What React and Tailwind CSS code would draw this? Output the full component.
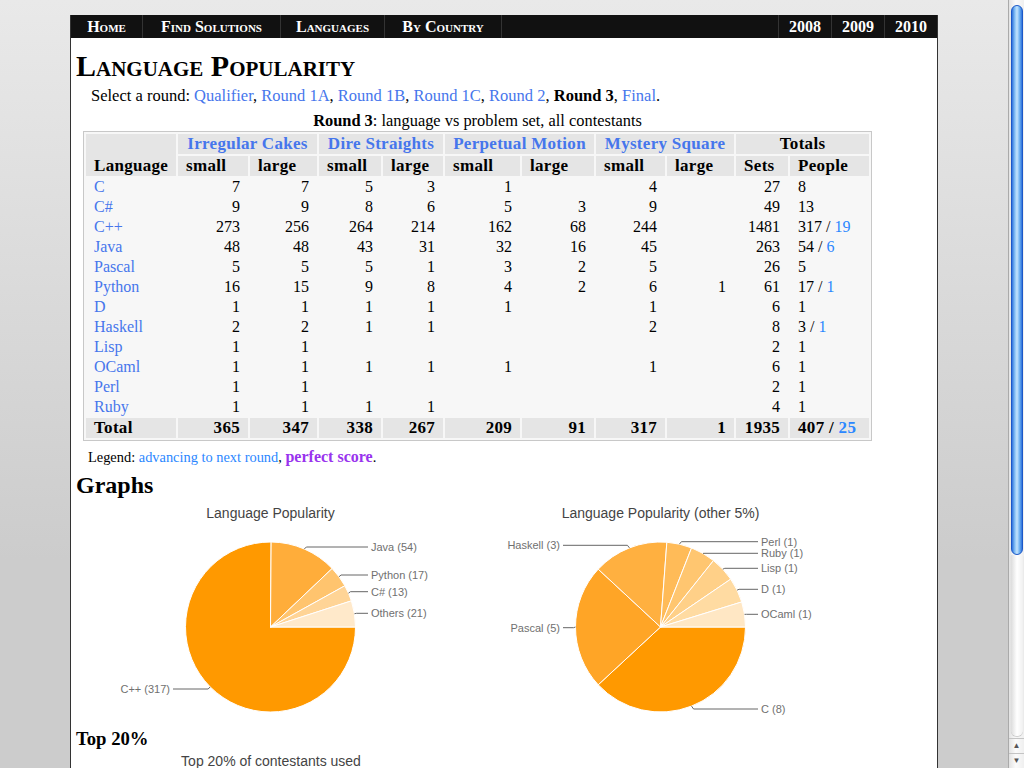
import React from "react";

const LINK = "text-[#4676ec]";
const ADV = "text-[#2b87ff]";

const LEFT_NAV = [
  { label: "Home", w: "w-[72px]" },
  { label: "Find Solutions", w: "w-[138px]" },
  { label: "Languages", w: "w-[104px]" },
  { label: "By Country", w: "w-[117px]" },
];
const YEARS = ["2008", "2009", "2010"];

const ROUNDS = ["Qualifier", "Round 1A", "Round 1B", "Round 1C", "Round 2"];

const PROBLEMS = ["Irregular Cakes", "Dire Straights", "Perpetual Motion", "Mystery Square"];

const COLS = [
  "w-[90px]", "w-[70px]", "w-[67px]", "w-[62px]", "w-[60px]",
  "w-[75px]", "w-[72px]", "w-[69px]", "w-[67px]", "w-[52px]", "w-[79px]",
];

// name, 8 problem cells, sets, people [count, advancing]
const ROWS = [
  ["C", [7, 7, 5, 3, 1, "", 4, ""], 27, [8]],
  ["C#", [9, 9, 8, 6, 5, 3, 9, ""], 49, [13]],
  ["C++", [273, 256, 264, 214, 162, 68, 244, ""], 1481, [317, 19]],
  ["Java", [48, 48, 43, 31, 32, 16, 45, ""], 263, [54, 6]],
  ["Pascal", [5, 5, 5, 1, 3, 2, 5, ""], 26, [5]],
  ["Python", [16, 15, 9, 8, 4, 2, 6, 1], 61, [17, 1]],
  ["D", [1, 1, 1, 1, 1, "", 1, ""], 6, [1]],
  ["Haskell", [2, 2, 1, 1, "", "", 2, ""], 8, [3, 1]],
  ["Lisp", [1, 1, "", "", "", "", "", ""], 2, [1]],
  ["OCaml", [1, 1, 1, 1, 1, "", 1, ""], 6, [1]],
  ["Perl", [1, 1, "", "", "", "", "", ""], 2, [1]],
  ["Ruby", [1, 1, 1, 1, "", "", "", ""], 4, [1]],
];
const TOTAL = [365, 347, 338, 267, 209, 91, 317, 1];

const LEFT_PIE = [
  { v: 317, c: "#ff9900", label: "C++ (317)", lx: 94, ly: 189, side: "left" },
  { v: 54, c: "#ffad3a", label: "Java (54)", lx: 295, ly: 47, side: "right" },
  { v: 17, c: "#ffc46e", label: "Python (17)", lx: 295, ly: 75, side: "right" },
  { v: 13, c: "#ffd496", label: "C# (13)", lx: 295, ly: 91.7, side: "right" },
  { v: 21, c: "#ffe9ca", label: "Others (21)", lx: 295, ly: 113.3, side: "right" },
];

const RIGHT_PIE = [
  { v: 8, c: "#ff9900", label: "C (8)", lx: 295, ly: 209, side: "right" },
  { v: 5, c: "#ffa526", label: "Pascal (5)", lx: 94, ly: 127.7, side: "left" },
  { v: 3, c: "#ffb040", label: "Haskell (3)", lx: 94, ly: 45.3, side: "left" },
  { v: 1, c: "#ffbb58", label: "Perl (1)", lx: 295, ly: 41.7, side: "right" },
  { v: 1, c: "#ffc670", label: "Ruby (1)", lx: 295, ly: 53.3, side: "right" },
  { v: 1, c: "#ffd088", label: "Lisp (1)", lx: 295, ly: 68.3, side: "right" },
  { v: 1, c: "#ffdba2", label: "D (1)", lx: 295, ly: 89.3, side: "right" },
  { v: 1, c: "#ffe7c4", label: "OCaml (1)", lx: 295, ly: 114.3, side: "right" },
];

function pt(cx, cy, r, deg) {
  const a = (deg * Math.PI) / 180;
  return [cx + r * Math.cos(a), cy + r * Math.sin(a)];
}

function PieChart({ title, slices }) {
  const cx = 194.5;
  const cy = 127;
  const r = 85;
  const total = slices.reduce((s, x) => s + x.v, 0);
  let a = 0;
  const parts = slices.map((s) => {
    const a0 = a;
    const a1 = a + (s.v / total) * 360;
    a = a1;
    return { ...s, a0, a1 };
  });

  return (
    <svg width="390" height="225" className="block shrink-0">
      <text
        x={cx}
        y="18.3"
        textAnchor="middle"
        fontFamily="'Liberation Sans', Arial, sans-serif"
        fontSize="14"
        fill="#444"
      >
        {title}
      </text>
      {parts.map((p, i) => {
        const [x0, y0] = pt(cx, cy, r, p.a0);
        const [x1, y1] = pt(cx, cy, r, p.a1);
        const large = p.a1 - p.a0 > 180 ? 1 : 0;
        return (
          <path
            key={i}
            d={`M${cx},${cy} L${x0},${y0} A${r},${r} 0 ${large} 1 ${x1},${y1} Z`}
            fill={p.c}
            stroke="#fff"
            strokeWidth="1"
          />
        );
      })}
      {parts.map((p, i) => {
        const [ex, ey] = pt(cx, cy, r, (p.a0 + p.a1) / 2);
        const right = p.side === "right";
        const endX = right ? p.lx - 3 : p.lx + 3;
        const midX = right ? ex + 2 : ex - 2;
        return (
          <g key={i}>
            <polyline
              points={`${ex},${ey} ${midX},${p.ly} ${endX},${p.ly}`}
              fill="none"
              stroke="#666"
              strokeWidth="1"
            />
            <text
              x={p.lx}
              y={p.ly + 4}
              textAnchor={right ? "start" : "end"}
              fontFamily="'Liberation Sans', Arial, sans-serif"
              fontSize="11"
              fill="#707070"
            >
              {p.label}
            </text>
          </g>
        );
      })}
    </svg>
  );
}

function People({ p }) {
  if (p.length === 1) return <>{p[0]}</>;
  return (
    <>
      {p[0]} / <span className={ADV}>{p[1]}</span>
    </>
  );
}

function Scrollbar() {
  return (
    <div className="flex h-[768px] w-[16px] shrink-0 flex-col border-l border-[#aaaaaa] bg-[linear-gradient(to_right,#e2e2e2,#fbfbfb_45%,#efefef)]">
      <div className="h-[5px]" />
      <div className="mx-auto h-[550px] w-[12px] rounded-full border border-[#1b58c8] bg-[linear-gradient(to_right,#2e73dd,#8ac4f6_30%,#c4e3fd_50%,#7ab9f3_72%,#2e73dd)]" />
      <div className="mx-auto w-[12px] flex-1 rounded-b-full bg-[linear-gradient(to_right,#dcdcdc,#ffffff_50%,#f0f0f0)] shadow-[0_1px_1px_rgba(0,0,0,0.2)]" />
      <div className="mt-[2px] flex h-[15px] items-center justify-center border-t border-[#c4c4c4] text-[8px] leading-none text-[#555]">
        ▲
      </div>
      <div className="flex h-[15px] items-center justify-center border-t border-[#c4c4c4] text-[8px] leading-none text-[#555]">
        ▼
      </div>
    </div>
  );
}

const TH = "bg-[#e5e5e5] p-0 text-[17px] font-bold tracking-[0.3px]";

export default function App() {
  return (
    <div className="flex h-[768px] overflow-hidden bg-[linear-gradient(to_bottom,#e9e9e9_0px,#cccccc_560px)] font-['Liberation_Serif',serif] text-black">
      <div className="flex flex-1 justify-center pt-[15px]">
        <div className="h-[900px] w-[868px] border-x border-[#333] bg-white">
          {/* top nav */}
          <div className="flex h-[23px] bg-[#111] text-[16px] font-bold leading-[23px] text-white [font-variant:small-caps]">
            {LEFT_NAV.map((n) => (
              <div key={n.label} className={`${n.w} border-r border-[#333] text-center`}>
                {n.label}
              </div>
            ))}
            <div className="flex-1" />
            {YEARS.map((y) => (
              <div key={y} className="w-[53px] border-l border-[#333] text-center">
                {y}
              </div>
            ))}
          </div>

          <div className="pl-[5px]">
            <h1 className="mt-[10px] h-[36px] text-[30px] font-bold leading-[36px] [font-variant:small-caps]">
              Language Popularity
            </h1>
            <p className="mt-[2px] ml-[15px] text-[16.5px] leading-[20px]">
              Select a round:{" "}
              {ROUNDS.map((r) => (
                <span key={r}>
                  <span className={LINK}>{r}</span>,{" "}
                </span>
              ))}
              <b>Round 3</b>, <span className={LINK}>Final</span>.
            </p>

            {/* table */}
            <div className="mt-[5px] ml-[7px] w-[789px]">
              <div className="text-center text-[16.4px] leading-[20px]">
                <b>Round 3</b>: language vs problem set, all contestants
              </div>
              <table className="w-[789px] table-fixed border-separate border-spacing-[2px] border border-[#c8c8c8] bg-[#f7f7f7] text-[16px]">
                <colgroup>
                  {COLS.map((c, i) => (
                    <col key={i} className={c} />
                  ))}
                </colgroup>
                <thead>
                  <tr className="h-[20px] leading-[20px]">
                    <th rowSpan={2} className={`${TH} pl-2 text-left align-bottom`}>
                      Language
                    </th>
                    {PROBLEMS.map((p) => (
                      <th key={p} colSpan={2} className={`${TH} text-center whitespace-nowrap ${LINK}`}>
                        {p}
                      </th>
                    ))}
                    <th colSpan={2} className={`${TH} text-center`}>
                      Totals
                    </th>
                  </tr>
                  <tr className="h-[20px] leading-[20px]">
                    {["small", "large", "small", "large", "small", "large", "small", "large", "Sets", "People"].map(
                      (h, i) => (
                        <th key={i} className={`${TH} pl-2 text-left`}>
                          {h}
                        </th>
                      )
                    )}
                  </tr>
                </thead>
                <tbody>
                  {ROWS.map(([name, vals, sets, people]) => (
                    <tr key={name} className="h-[18px] leading-[18px]">
                      <td className={`p-0 pl-2 ${LINK}`}>{name}</td>
                      {vals.map((v, i) => (
                        <td key={i} className="p-0 pr-2 text-right">
                          {v}
                        </td>
                      ))}
                      <td className="p-0 pr-2 text-right">{sets}</td>
                      <td className="p-0 pl-2 text-left whitespace-nowrap">
                        <People p={people} />
                      </td>
                    </tr>
                  ))}
                  <tr className="h-[20px] leading-[20px]">
                    <td className={`${TH} pl-2`}>Total</td>
                    {TOTAL.map((v, i) => (
                      <td key={i} className={`${TH} pr-2 text-right`}>
                        {v}
                      </td>
                    ))}
                    <td className={`${TH} pr-2 text-right`}>1935</td>
                    <td className={`${TH} pl-2 text-left whitespace-nowrap`}>
                      <People p={[407, 25]} />
                    </td>
                  </tr>
                </tbody>
              </table>
            </div>

            <p className="mt-[6px] ml-[12px] text-[14.4px] leading-[20px]">
              Legend: <span className={ADV}>advancing to next round</span>,{" "}
              <b className="text-[16px] text-[#9933ee]">perfect score</b>.
            </p>

            <h2 className="mt-[4px] h-[28px] text-[24px] font-bold leading-[28px]">Graphs</h2>

            <div className="mt-[1px] flex">
              <PieChart title="Language Popularity" slices={LEFT_PIE} />
              <PieChart title="Language Popularity (other 5%)" slices={RIGHT_PIE} />
            </div>

            <h3 className="mt-[3px] h-[22px] text-[18.7px] font-bold leading-[22px]">Top 20%</h3>

            <div className="mt-[1px] w-[390px] text-center font-['Liberation_Sans',Arial,sans-serif] text-[14px] leading-[20px] text-[#444]">
              Top 20% of contestants used
            </div>
          </div>
        </div>
      </div>
      <Scrollbar />
    </div>
  );
}
